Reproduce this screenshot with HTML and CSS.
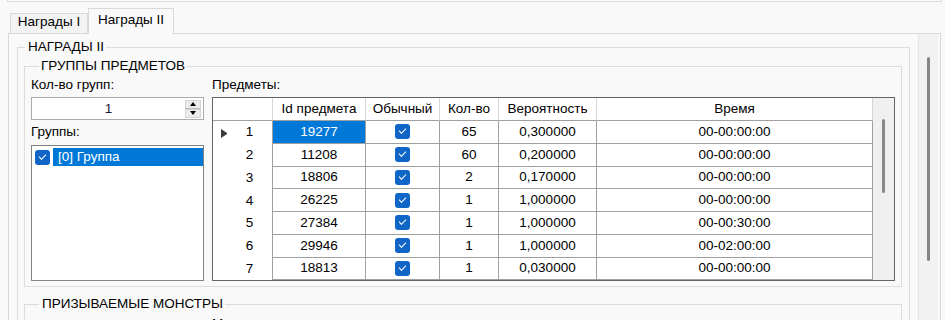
FILE: index.html
```html
<!DOCTYPE html>
<html lang="ru">

<head>
    <meta charset="UTF-8">
    <meta name="viewport" content="width=device-width, initial-scale=1.0">
    <title>Награды II</title>
    <link rel="stylesheet" href="styles.css">
</head>

<body>
    <div class="topbar"></div>
    <div class="tabctl">
        <div class="tabs">
            <div class="tab">Награды I</div>
            <div class="tab active">Награды II</div>
        </div>
        <div class="tabpage">
            <div class="page-content">
                <fieldset class="group outer">
                    <legend>НАГРАДЫ II</legend>
                    <fieldset class="group inner items">
                        <legend>ГРУППЫ ПРЕДМЕТОВ</legend>
                        <div class="cols">
                            <div class="left">
                                <div class="label">Кол-во групп:</div>
                                <div class="numeric">
                                    <span class="num-value">1</span>
                                    <div class="spin">
                                        <span class="spin-btn up"></span>
                                        <span class="spin-btn down"></span>
                                    </div>
                                </div>
                                <div class="label label-groups">Группы:</div>
                                <div class="listbox">
                                    <div class="list-item">
                                        <span class="chk"></span>
                                        <span class="item-text">[0] Группа</span>
                                    </div>
                                </div>
                            </div>
                            <div class="right">
                                <div class="label">Предметы:</div>
                                <div class="grid">
                                    <div class="cells">
                                        <div class="hc corner"></div>
                                        <div class="hc">Id предмета</div>
                                        <div class="hc">Обычный</div>
                                        <div class="hc">Кол-во</div>
                                        <div class="hc">Вероятность</div>
                                        <div class="hc">Время</div>

                                        <div class="rh"><span class="ind current"></span><span class="rn">1</span></div>
                                        <div class="c sel">19277</div>
                                        <div class="c"><span class="chk"></span></div>
                                        <div class="c">65</div>
                                        <div class="c">0,300000</div>
                                        <div class="c">00-00:00:00</div>

                                        <div class="rh"><span class="ind"></span><span class="rn">2</span></div>
                                        <div class="c">11208</div>
                                        <div class="c"><span class="chk"></span></div>
                                        <div class="c">60</div>
                                        <div class="c">0,200000</div>
                                        <div class="c">00-00:00:00</div>

                                        <div class="rh"><span class="ind"></span><span class="rn">3</span></div>
                                        <div class="c">18806</div>
                                        <div class="c"><span class="chk"></span></div>
                                        <div class="c">2</div>
                                        <div class="c">0,170000</div>
                                        <div class="c">00-00:00:00</div>

                                        <div class="rh"><span class="ind"></span><span class="rn">4</span></div>
                                        <div class="c">26225</div>
                                        <div class="c"><span class="chk"></span></div>
                                        <div class="c">1</div>
                                        <div class="c">1,000000</div>
                                        <div class="c">00-00:00:00</div>

                                        <div class="rh"><span class="ind"></span><span class="rn">5</span></div>
                                        <div class="c">27384</div>
                                        <div class="c"><span class="chk"></span></div>
                                        <div class="c">1</div>
                                        <div class="c">1,000000</div>
                                        <div class="c">00-00:30:00</div>

                                        <div class="rh"><span class="ind"></span><span class="rn">6</span></div>
                                        <div class="c">29946</div>
                                        <div class="c"><span class="chk"></span></div>
                                        <div class="c">1</div>
                                        <div class="c">1,000000</div>
                                        <div class="c">00-02:00:00</div>

                                        <div class="rh"><span class="ind"></span><span class="rn">7</span></div>
                                        <div class="c">18813</div>
                                        <div class="c"><span class="chk"></span></div>
                                        <div class="c">1</div>
                                        <div class="c">0,030000</div>
                                        <div class="c">00-00:00:00</div>
                                    </div>
                                    <div class="gscroll"><div class="gthumb"></div></div>
                                </div>
                            </div>
                        </div>
                    </fieldset>
                    <fieldset class="group inner monsters">
                        <legend>ПРИЗЫВАЕМЫЕ МОНСТРЫ</legend>
                        <div class="cols">
                            <div class="left"></div>
                            <div class="right">
                                <div class="label">Монстры:</div>
                            </div>
                        </div>
                    </fieldset>
                </fieldset>
            </div>
            <div class="vscroll"><div class="vthumb"></div></div>
        </div>
    </div>
</body>

</html>
```

FILE: styles.css
```css
html, body {
    margin: 0;
    height: 320px;
    overflow: hidden;
}

body {
    background-color: #f9f9f9;
    font-family: "Liberation Sans", Arial, sans-serif;
    font-size: 13.5px;
    line-height: 16px;
    color: #000;
}

.topbar {
    margin-left: 7px;
    width: 933px;
    height: 1px;
    border: 1px solid #dcdcdc;
    border-top: none;
}

.tabctl {
    margin-left: 8px;
    width: 933px;
}

.tabs {
    display: flex;
    align-items: flex-end;
    height: 25px;
    margin-top: 6px;
    padding-left: 2px;
}

.tab {
    box-sizing: border-box;
    width: 78px;
    height: 20px;
    border: 1px solid #d9d9d9;
    border-bottom: none;
    background-color: #f3f3f3;
    text-align: center;
}

.tab.active {
    position: relative;
    z-index: 1;
    width: 86px;
    height: 26px;
    margin-bottom: -1px;
    padding-top: 3px;
    background-color: #f9f9f9;
}

.tabpage {
    display: flex;
    height: 400px;
    border: 1px solid #d9d9d9;
    border-bottom: none;
}

.page-content {
    flex: 1;
    min-width: 0;
}

.vscroll {
    width: 20px;
    margin-right: 2px;
    padding-top: 23px;
    box-sizing: border-box;
    background-color: #f2f2f2;
    border-left: 1px solid #e6e6e6;
    display: flex;
    justify-content: center;
}

.vthumb {
    width: 3px;
    height: 204px;
    border-radius: 2px;
    background-color: #858585;
}

/* group boxes */
.group {
    border: 1px solid #dcdcdc;
    margin: 0;
    padding: 0;
    min-width: 0;
}

.group legend {
    padding: 0 2px 0 3px;
    margin-left: 7px;
    line-height: 16px;
}

.outer {
    margin: 5px 8px 0 8px;
    height: 400px;
}

.inner {
    margin: 3px 7px 0 6px;
    padding: 3px 6px 5px 6px;
}

.inner legend {
    margin-left: 8px;
    padding-left: 2px;
}

.monsters {
    margin-top: 9px;
    padding-top: 4px;
    height: 100px;
}

.monsters legend {
    padding-left: 3px;
}

.cols {
    display: grid;
    grid-template-columns: 173px 683px;
    column-gap: 8px;
}

.label {
    height: 16px;
    white-space: nowrap;
}

/* numeric up-down */
.numeric {
    box-sizing: border-box;
    height: 23px;
    margin-top: 4px;
    border: 1px solid #ababab;
    background-color: #fff;
    display: flex;
    align-items: center;
}

.num-value {
    flex: 1;
    text-align: center;
    color: #1e1430;
}

.spin {
    width: 16px;
    height: 18px;
    margin-right: 2px;
    display: flex;
    flex-direction: column;
}

.spin-btn {
    flex: 1;
    box-sizing: border-box;
    border: 1px solid #d4d4d4;
    background-color: #ececec;
    display: flex;
    align-items: center;
    justify-content: center;
}

.spin-btn.up {
    border-bottom-color: #bdbdbd;
}

.spin-btn.up::after {
    content: "";
    border-left: 3.5px solid transparent;
    border-right: 3.5px solid transparent;
    border-bottom: 4px solid #000;
}

.spin-btn.down::after {
    content: "";
    border-left: 3.5px solid transparent;
    border-right: 3.5px solid transparent;
    border-top: 4px solid #000;
}

.label-groups {
    margin-top: 4px;
}

/* list box */
.listbox {
    box-sizing: border-box;
    height: 136px;
    margin-top: 5px;
    border: 1px solid #828282;
    background-color: #fff;
    padding-top: 2px;
}

.list-item {
    display: flex;
    align-items: center;
    height: 18px;
}

.list-item .chk {
    margin-left: 3px;
    margin-right: 3px;
}

.item-text {
    flex: 1;
    height: 18px;
    padding-left: 5px;
    line-height: 18px;
    background-color: #0078d7;
    color: #fff;
}

/* check box */
.chk {
    position: relative;
    display: inline-block;
    width: 15px;
    height: 15px;
    border-radius: 3px;
    background-color: #1066c6;
    flex-shrink: 0;
}

.chk::after {
    content: "";
    position: absolute;
    left: 4px;
    top: 4px;
    width: 6px;
    height: 3px;
    border-left: 1.3px solid #fff;
    border-bottom: 1.3px solid #fff;
    transform: rotate(-45deg);
}

/* data grid */
.grid {
    margin-top: 4px;
    display: flex;
    border: 1px solid #646464;
    background-color: #fff;
}

.cells {
    display: grid;
    grid-template-columns: 60px 93px 74px 59px 98px 276px;
    grid-template-rows: 23px repeat(7, 22.75px);
}

.hc, .c, .rh {
    box-sizing: border-box;
    display: flex;
    align-items: center;
    justify-content: center;
    white-space: nowrap;
    border-right: 1px solid #a0a0a0;
}

.hc {
    border-right-color: #d6d6d6;
    border-bottom: 1px solid #a0a0a0;
}

.c {
    border-bottom: 1px solid #a0a0a0;
}

.c.sel {
    background-color: #0078d7;
    color: #fff;
    border-bottom-color: #a0a0a0;
}

.rh {
    justify-content: flex-start;
}

.ind {
    width: 6px;
    height: 9px;
    margin-left: 8px;
    box-sizing: border-box;
}

.ind.current {
    border-left: 6px solid #3a3a3a;
    border-top: 4.5px solid transparent;
    border-bottom: 4.5px solid transparent;
    margin-top: 3px;
}

.rn {
    flex: 1;
    text-align: center;
}

.gscroll {
    width: 21px;
    padding-top: 21px;
    box-sizing: border-box;
    background-color: #f0f0f0;
}

.gthumb {
    width: 3px;
    height: 74px;
    margin-left: 9px;
    border-radius: 2px;
    background-color: #8a8a8a;
}
```
